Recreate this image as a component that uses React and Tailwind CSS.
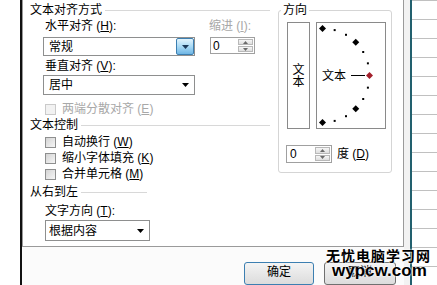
import React from 'react';

const Key = ({ k }) => (
  <>
    {' ('}
    <span className="underline underline-offset-1">{k}</span>
    {')'}
  </>
);

const Arrow = ({ color = '#000' }) => (
  <svg width="7" height="4" viewBox="0 0 7 4">
    <polygon points="0,0 7,0 3.5,4" fill={color} />
  </svg>
);

const Combo = ({ value, className, pad, hot }) => (
  <div className={`flex border border-[#8e8f8f] bg-white ${className}`}>
    <span className={`flex-1 flex items-center ${pad}`}>{value}</span>
    {hot ? (
      <div className="w-[18px] flex items-center justify-center border border-[#3c7fb1] rounded-[2px] bg-linear-to-b from-[#e3f4fc] via-[#a9daf5] to-[#6fb6e4]">
        <Arrow color="#1c3a5a" />
      </div>
    ) : (
      <div className="w-[18px] flex items-center justify-center">
        <Arrow />
      </div>
    )}
  </div>
);

const Spin = ({ className, pad }) => (
  <div className={`flex border border-[#a0a0a0] bg-white ${className}`}>
    <span className={`flex-1 flex items-center ${pad}`}>0</span>
    <div className="w-[17px] flex flex-col p-px gap-px">
      <div className="flex-1 flex items-center justify-center border border-[#b8b8b8] bg-linear-to-b from-[#f6f6f6] to-[#dedede]">
        <svg width="5" height="3" viewBox="0 0 5 3">
          <polygon points="0,3 5,3 2.5,0" fill="#6a6a6a" />
        </svg>
      </div>
      <div className="flex-1 flex items-center justify-center border border-[#b8b8b8] bg-linear-to-b from-[#f6f6f6] to-[#dedede]">
        <svg width="5" height="3" viewBox="0 0 5 3">
          <polygon points="0,0 5,0 2.5,3" fill="#6a6a6a" />
        </svg>
      </div>
    </div>
  </div>
);

const Check = ({ label, k, disabled }) => (
  <div className="flex items-center h-[16px] ml-[15px]">
    <div
      className={
        disabled
          ? 'w-[11px] h-[11px] border border-[#cacaca] bg-[#f2f2f2]'
          : 'w-[11px] h-[11px] border border-[#8e8f8f] bg-linear-to-br from-[#d4d4d4] to-[#f6f6f6]'
      }
    />
    <span className={`ml-[6px] ${disabled ? 'text-[#a8a8a8]' : ''}`}>
      {label}
      <Key k={k} />
    </span>
  </div>
);

const Header = ({ text, className }) => (
  <div className={`flex items-center h-[14px] ${className}`}>
    <span>{text}</span>
    <div className="ml-[3px] flex-1 h-px bg-[#d8d8d8]" />
  </div>
);

const Dial = () => {
  const cx = 5.5;
  const cy = 52.5;
  const r = 47;
  const pt = (a) => [cx + r * Math.cos((a * Math.PI) / 180), cy - r * Math.sin((a * Math.PI) / 180)];
  const diamonds = [90, 45, 0, -45, -90];
  const dots = [75, 60, 30, 15, -15, -30, -60, -75];
  return (
    <svg className="absolute inset-0" width="68" height="105" viewBox="0 0 68 105">
      {dots.map((a) => {
        const [x, y] = pt(a);
        return <rect key={a} x={x - 1} y={y - 1} width="2" height="2" fill="#000" />;
      })}
      {diamonds.map((a) => {
        const [x, y] = pt(a);
        const s = 3.5;
        return (
          <polygon
            key={a}
            points={`${x},${y - s} ${x + s},${y} ${x},${y + s} ${x - s},${y}`}
            fill={a === 0 ? '#a3202c' : '#000'}
          />
        );
      })}
    </svg>
  );
};

const App = () => {
  const rows = Array.from({ length: 15 }, (_, i) => i);

  return (
    <div className="relative w-[437px] h-[285px] overflow-hidden bg-white flex text-[12px] leading-[14px] text-black font-['Liberation_Sans','Noto_Sans_CJK_SC',sans-serif]">
      <div className="w-[20px]" />
      <div className="w-[2px] bg-[#111]" />

      {/* dialog */}
      <div className="w-[382px] flex flex-col">
        <div className="h-[253px] border-l border-r border-b border-[#9a9a9a] bg-white flex">
          {/* left column */}
          <div className="w-[247px] pl-[7px] flex flex-col">
            <Header text="文本对齐方式" className="mt-[3px] w-[240px]" />
            <div className="ml-[13px] flex mt-[2px]">
              <div className="w-[152px] flex flex-col">
                <span className="pl-[2px] h-[14px]">
                  水平对齐
                  <Key k="H" />:
                </span>
                <Combo value="常规" hot className="mt-[4px] h-[19px]" pad="pl-[5px]" />
              </div>
              <div className="ml-[14px] flex flex-col">
                <span className="h-[14px] text-[#a8a8a8]">
                  缩进
                  <Key k="I" />:
                </span>
                <Spin className="mt-[4px] ml-px w-[45px] h-[17px]" pad="pl-[2px]" />
              </div>
            </div>
            <span className="ml-[15px] mt-[3px] h-[14px]">
              垂直对齐
              <Key k="V" />:
            </span>
            <Combo value="居中" className="ml-[13px] mt-[2px] w-[152px] h-[20px]" pad="pl-[5px]" />
            <div className="mt-[6px]">
              <Check label="两端分散对齐" k="E" disabled />
            </div>

            <Header text="文本控制" className="mt-[1px] w-[240px]" />
            <div className="mt-[2px] flex flex-col">
              <Check label="自动换行" k="W" />
              <Check label="缩小字体填充" k="K" />
              <Check label="合并单元格" k="M" />
            </div>

            <Header text="从右到左" className="mt-[3px] w-[117px]" />
            <span className="ml-[15px] mt-[5px] h-[14px]">
              文字方向
              <Key k="T" />:
            </span>
            <Combo value="根据内容" className="ml-[15px] mt-[2px] w-[105px] h-[21px]" pad="pl-[3px]" />
          </div>

          {/* orientation group */}
          <fieldset className="ml-[8px] mt-[3px] w-[114px] h-[170px] border border-[#d5d5d5] rounded-[3px]">
            <legend className="ml-[2px] px-[2px] leading-[14px]">方向</legend>
            <div className="pl-[8px] mt-[5px] flex flex-col">
              <div className="flex">
                <div className="w-[23px] h-[107px] border border-[#8a8a8a] flex flex-col items-center justify-center leading-[12px]">
                  <span>文</span>
                  <span>本</span>
                </div>
                <div className="relative ml-[6px] w-[70px] h-[107px] border border-[#8a8a8a] flex items-center pl-[5px]">
                  <Dial />
                  <span className="relative">文本</span>
                  <div className="relative ml-[5px] w-[14px] h-px bg-black" />
                </div>
              </div>
              <div className="flex items-center mt-[16px] -ml-px">
                <Spin className="w-[46px] h-[18px]" pad="pl-[3px]" />
                <span className="ml-[5px]">
                  度<Key k="D" />
                </span>
              </div>
            </div>
          </fieldset>
        </div>

        {/* button bar */}
        <div className="flex-1 bg-[#fbfbfb] flex justify-end items-start pr-[8px] gap-[10px]">
          <button className="mt-[15px] w-[70px] h-[23px] border border-[#3c7fb1] rounded-[3px] bg-linear-to-b from-[#f4f4f4] to-[#dcdcdc] flex justify-center pt-[2px]">
            确定
          </button>
          <button className="mt-[15px] w-[72px] h-[23px] border border-[#707070] rounded-[3px] bg-linear-to-b from-[#f4f4f4] to-[#dcdcdc] flex justify-center pt-[2px]">
            取消
          </button>
        </div>
      </div>

      <div className="w-[6px] bg-[#f2f2f2]" />
      <div className="w-[2px] bg-[#22606e]" />

      {/* sheet */}
      <div className="flex-1 flex flex-col border-t border-[#c0c0c0]">
        {rows.map((i) => (
          <div key={i} className="h-[19px] shrink-0 border-b border-[#c0c0c0]" />
        ))}
      </div>

      {/* watermark */}
      <div className="absolute left-[326px] top-[249px] flex flex-col font-bold [text-shadow:0_0_2px_#fff,0_0_2px_#fff]">
        <span className="text-[14px] leading-[15px] tracking-[1px]">无忧电脑学习网</span>
        <span className="ml-[6px] text-[17px] leading-[14px] font-['Liberation_Sans',sans-serif]">wypcw.com</span>
      </div>
    </div>
  );
};

export default App;
